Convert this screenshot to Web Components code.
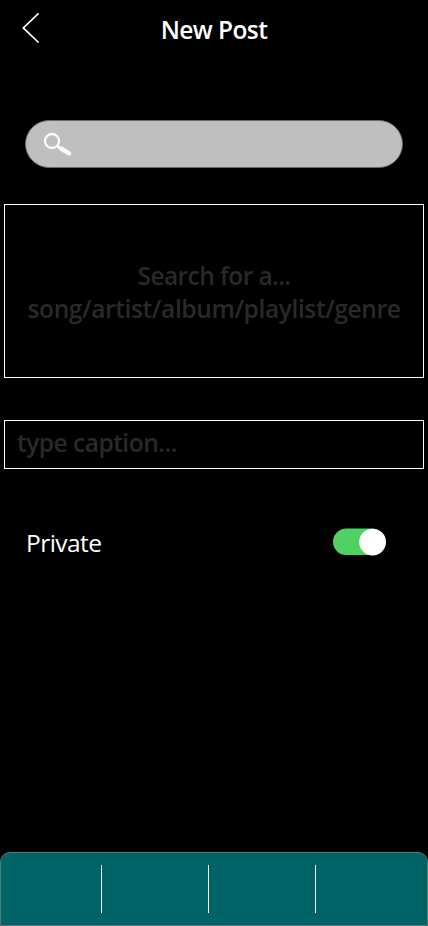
<!DOCTYPE html>
<html lang="en"><head><meta charset="utf-8"><title>New Post</title>
<style>
html,body{margin:0;background:#000}
body{font-family:"Open Sans","Noto Sans",sans-serif;color:#fff}
</style></head><body>
<post-page>
<post-header slot="header">New Post</post-header>
<search-bar></search-bar>
<result-panel><span>Search for a...</span><span slot="kinds">song/artist/album/playlist/genre</span></result-panel>
<caption-field>type caption...</caption-field>
<privacy-row>Private</privacy-row>
<tab-bar slot="footer"></tab-bar>
</post-page>
<script>
const define = (name, html) => customElements.define(name, class extends HTMLElement {
  constructor() {
    super();
    this.attachShadow({mode: 'open'}).innerHTML = html;
  }
});
define('post-page', `<style>
:host{display:flex;flex-direction:column;width:428px;height:926px;background:#000;overflow:hidden}
main{flex:1;display:flex;flex-direction:column}
</style><slot name="header"></slot><main><slot></slot></main><slot name="footer"></slot>`);
define('post-header', `<style>
:host{display:grid;grid-template-columns:50px 1fr 50px;height:60px;align-items:center}
svg{display:block}
h1{margin:0;font-size:24.5px;font-weight:600;line-height:34px;text-align:center;letter-spacing:-.6px;white-space:nowrap}
</style><svg width="50" height="60" fill="none" stroke="#fff" stroke-width="1.7"><path d="M38.6 13.4 23.3 27.9 38.6 42.5"/></svg><h1><slot></slot></h1>`);
define('search-bar', `<style>
:host{display:block;box-sizing:border-box;height:48px;margin:60px 25px 0;border:1px solid #686868;border-radius:24px;background:#bfbfbf}
svg{display:block}
</style><svg width="60" height="46" fill="none" stroke="#fafafa"><circle cx="26" cy="20" r="7" stroke-width="2.3"/><path d="M31.2 25 35 27.7" stroke-width="3.2"/><path d="M35 27.5 43 32.3" stroke-width="4.4" stroke-linecap="round"/></svg>`);
define('result-panel', `<style>
:host{display:flex;flex-direction:column;align-items:center;justify-content:center;box-sizing:border-box;height:174px;margin:36px 4px 0;border:1px solid #fff;color:#292929;font-size:24.5px;font-weight:600;line-height:33px;padding-top:2px;white-space:nowrap}
.lead{letter-spacing:-.58px}.kinds{letter-spacing:-.38px}
</style><div class="lead"><slot></slot></div><div class="kinds"><slot name="kinds"></slot></div>`);
define('caption-field', `<style>
:host{display:flex;align-items:center;box-sizing:border-box;height:49px;margin:42px 4px 0;padding:0 12px 5px;border:1px solid #fff;color:#292929;font-size:24.5px;font-weight:600;line-height:33px;letter-spacing:-.5px}
</style><slot></slot>`);
define('toggle-switch', `<style>
:host{display:block;width:53px;height:27px}svg{display:block}
</style><svg width="53" height="28"><rect y="0.6" width="52" height="26.4" rx="13.2" fill="#4fd164"/><circle cx="39.6" cy="14.1" r="13.4" fill="#fff"/></svg>`);
define('privacy-row', `<style>
:host{display:flex;justify-content:space-between;align-items:center;height:34px;margin:57px 42px 0 26px;font-size:24.5px;line-height:34px;letter-spacing:-.55px}
toggle-switch{margin-bottom:4px}
</style><span><slot></slot></span><toggle-switch></toggle-switch>`);
define('tab-bar', `<style>
:host{display:grid;grid-template-columns:101px 107px 107px 1fr;box-sizing:border-box;height:74px;padding:12px 0;border:1px solid #597979;border-radius:10px 10px 0 0;background:#006466}
i{border-right:1px solid #fff}i:last-child{border:0}
</style><i></i><i></i><i></i><i></i>`);
</script></body></html>
